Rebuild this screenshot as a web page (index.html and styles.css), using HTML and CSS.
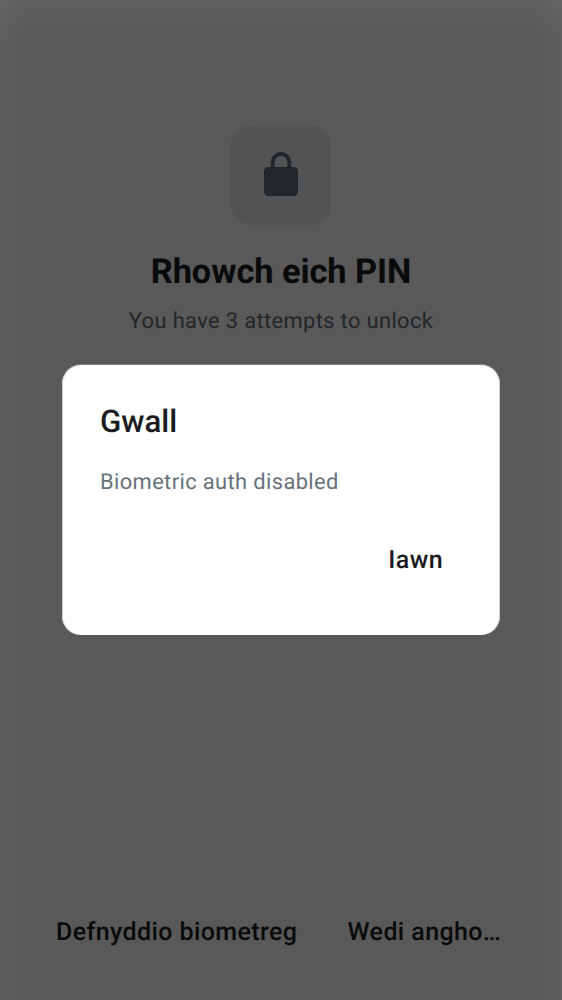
FILE: index.html
```html
<!DOCTYPE html>
<html lang="cy">
<head>
<meta charset="utf-8">
<title>PIN</title>
<link rel="stylesheet" href="styles.css">
</head>
<body>
<main class="screen">
  <div class="lock-tile">
    <svg class="lock" viewBox="0 0 34 44" width="34" height="44"><path d="M8.7 17V10.2a8.3 8.3 0 0 1 16.6 0V17" fill="none" stroke="#222629" stroke-width="3.8"/><rect y="15" width="34" height="29" rx="4.5" fill="#222629"/></svg>
  </div>
  <h1 class="title">Rhowch eich PIN</h1>
  <p class="subtitle">You have 3 attempts to unlock</p>
  <footer class="actions">
    <span class="action">Defnyddio biometreg</span>
    <span class="action">Wedi angho…</span>
  </footer>
</main>
<div class="overlay">
  <section class="dialog" role="dialog">
    <h2 class="dialog-title">Gwall</h2>
    <p class="dialog-text">Biometric auth disabled</p>
    <div class="dialog-actions"><span class="dialog-button">Iawn</span></div>
  </section>
</div>
</body>
</html>
```
FILE: styles.css
```css
* { box-sizing: border-box; }
body, h1, h2, p { margin: 0; }
body { font-family: Roboto, sans-serif; height: 1000px; overflow: hidden; text-rendering: geometricPrecision; }
.screen {
  width: 562px; height: 1000px; padding-top: 125px;
  display: flex; flex-direction: column; align-items: center;
  background:
    linear-gradient(to bottom, rgba(255,255,255,.04), transparent 38px),
    linear-gradient(to right, rgba(255,255,255,.03), transparent 26px, transparent 536px, rgba(255,255,255,.03)),
    #595959;
}
.lock-tile {
  width: 100px; height: 100px; border-radius: 22px; background: #525355;
  display: flex; align-items: center; justify-content: center;
}
.lock { display: block; margin-top: -2px; }
.title { margin-top: 27px; font-size: 34.375px; line-height: 40px; font-weight: 700; letter-spacing: -.05px; color: #090a0b; }
.subtitle { margin-top: 16px; font-size: 21.875px; line-height: 28px; letter-spacing: .37px; color: #222629; }
.actions {
  width: 100%; margin-top: auto; padding: 0 61px 51px 56px;
  display: flex; justify-content: space-between;
}
.action { font-size: 25px; line-height: 32px; font-weight: 500; letter-spacing: .4px; color: #090a0b; white-space: nowrap; }
.overlay { position: absolute; inset: 0; display: flex; align-items: center; justify-content: center; }
.dialog {
  width: 438px; height: 270px; padding: 38px; border-radius: 19px; background: #fff;
  box-shadow: 0 -1px 0 #858585, inset 1px 0 0 #cfcfcf, inset -1px 0 0 #cfcfcf;
  display: flex; flex-direction: column;
}
.dialog-title { font-size: 31.25px; line-height: 38px; font-weight: 500; color: #191b20; }
.dialog-text { margin-top: 28px; font-size: 21.875px; line-height: 28px; letter-spacing: .39px; color: #68727a; }
.dialog-actions { margin-top: 48px; padding-right: 19px; display: flex; justify-content: flex-end; }
.dialog-button { font-size: 25px; line-height: 32px; font-weight: 500; letter-spacing: .4px; color: #191b20; }
```
